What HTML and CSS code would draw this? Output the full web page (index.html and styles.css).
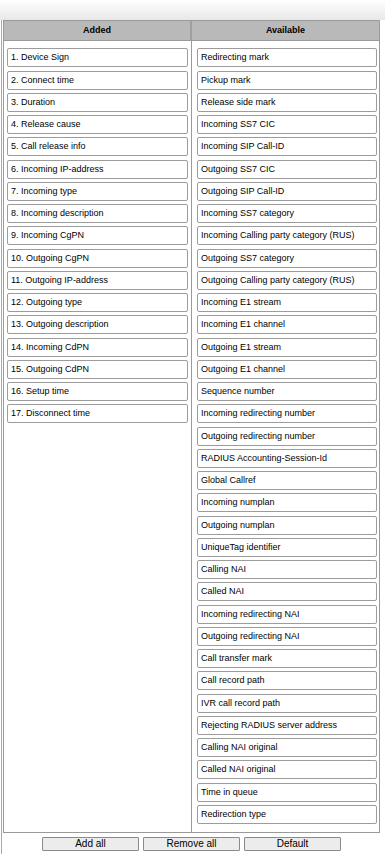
FILE: index.html
```html
<!DOCTYPE html>
<html lang="en">
<head>
  <meta charset="UTF-8" />
  <title>CDR fields</title>
  <link rel="stylesheet" href="styles.css">
</head>
<body>
  <div class="topbar"></div>

  <div class="panel">
    <div class="lists">
      <div class="list-head">
        <div class="col-title col-left">Added</div>
        <div class="col-title">Available</div>
      </div>
      <div class="list-body">
        <div class="col col-left">
          <div class="item">1. Device Sign</div>
          <div class="item">2. Connect time</div>
          <div class="item">3. Duration</div>
          <div class="item">4. Release cause</div>
          <div class="item">5. Call release info</div>
          <div class="item">6. Incoming IP-address</div>
          <div class="item">7. Incoming type</div>
          <div class="item">8. Incoming description</div>
          <div class="item">9. Incoming CgPN</div>
          <div class="item">10. Outgoing CgPN</div>
          <div class="item">11. Outgoing IP-address</div>
          <div class="item">12. Outgoing type</div>
          <div class="item">13. Outgoing description</div>
          <div class="item">14. Incoming CdPN</div>
          <div class="item">15. Outgoing CdPN</div>
          <div class="item">16. Setup time</div>
          <div class="item">17. Disconnect time</div>
        </div>
        <div class="col col-right">
          <div class="item">Redirecting mark</div>
          <div class="item">Pickup mark</div>
          <div class="item">Release side mark</div>
          <div class="item">Incoming SS7 CIC</div>
          <div class="item">Incoming SIP Call-ID</div>
          <div class="item">Outgoing SS7 CIC</div>
          <div class="item">Outgoing SIP Call-ID</div>
          <div class="item">Incoming SS7 category</div>
          <div class="item">Incoming Calling party category (RUS)</div>
          <div class="item">Outgoing SS7 category</div>
          <div class="item">Outgoing Calling party category (RUS)</div>
          <div class="item">Incoming E1 stream</div>
          <div class="item">Incoming E1 channel</div>
          <div class="item">Outgoing E1 stream</div>
          <div class="item">Outgoing E1 channel</div>
          <div class="item">Sequence number</div>
          <div class="item">Incoming redirecting number</div>
          <div class="item">Outgoing redirecting number</div>
          <div class="item">RADIUS Accounting-Session-Id</div>
          <div class="item">Global Callref</div>
          <div class="item">Incoming numplan</div>
          <div class="item">Outgoing numplan</div>
          <div class="item">UniqueTag identifier</div>
          <div class="item">Calling NAI</div>
          <div class="item">Called NAI</div>
          <div class="item">Incoming redirecting NAI</div>
          <div class="item">Outgoing redirecting NAI</div>
          <div class="item">Call transfer mark</div>
          <div class="item">Call record path</div>
          <div class="item">IVR call record path</div>
          <div class="item">Rejecting RADIUS server address</div>
          <div class="item">Calling NAI original</div>
          <div class="item">Called NAI original</div>
          <div class="item">Time in queue</div>
          <div class="item">Redirection type</div>
        </div>
      </div>
    </div>

    <div class="buttons">
      <button class="btn">Add all</button>
      <button class="btn">Remove all</button>
      <button class="btn">Default</button>
    </div>
  </div>
</body>
</html>
```

FILE: styles.css
```css
body {
  margin: 0;
  background: #fff;
  color: #000;
  font-family: "Liberation Sans", Arial, sans-serif;
  font-size: 9px;
}

.topbar {
  height: 20px;
  background: linear-gradient(#ffffff, #e8e8e8);
}

.panel {
  margin-left: 1px;
  border-left: 1px solid #a8a8a8;
  padding-left: 1px;
  min-height: 834px;
  box-sizing: border-box;
}

.lists {
  width: 377px;
  border: 1px solid #9a9a9a;
  box-sizing: border-box;
}

.list-head {
  display: grid;
  grid-template-columns: 188px 1fr;
  height: 19px;
  background: #b9b9b9;
  border-bottom: 1px solid #9a9a9a;
}

.col-title {
  font-weight: bold;
  text-align: center;
  line-height: 19px;
}

.list-head .col-left {
  border-right: 2px solid #a0a0a0;
}

.list-body {
  display: grid;
  grid-template-columns: 188px 1fr;
}

.col {
  padding: 4px 2px 8px 3px;
}

.col-left {
  border-right: 1px solid #9a9a9a;
}

.col-right {
  padding-left: 5px;
  padding-right: 2px;
}

.item {
  height: 19px;
  margin-top: 3.25px;
  line-height: 17px;
  padding-left: 3px;
  border: 1px solid #9c9c9c;
  border-radius: 2px;
  box-sizing: border-box;
  white-space: nowrap;
  overflow: hidden;
}

.col-left .item {
  width: 181px;
}

.buttons {
  display: flex;
  justify-content: center;
  gap: 4px;
  width: 377px;
  margin-top: 4px;
}

.btn {
  width: 97px;
  height: 14px;
  padding: 0;
  font-family: "Liberation Sans", Arial, sans-serif;
  font-size: 10px;
  line-height: 12px;
  color: #000;
  background: #ececec;
  border: 1px solid #8a8a8a;
  border-radius: 1px;
}
```
